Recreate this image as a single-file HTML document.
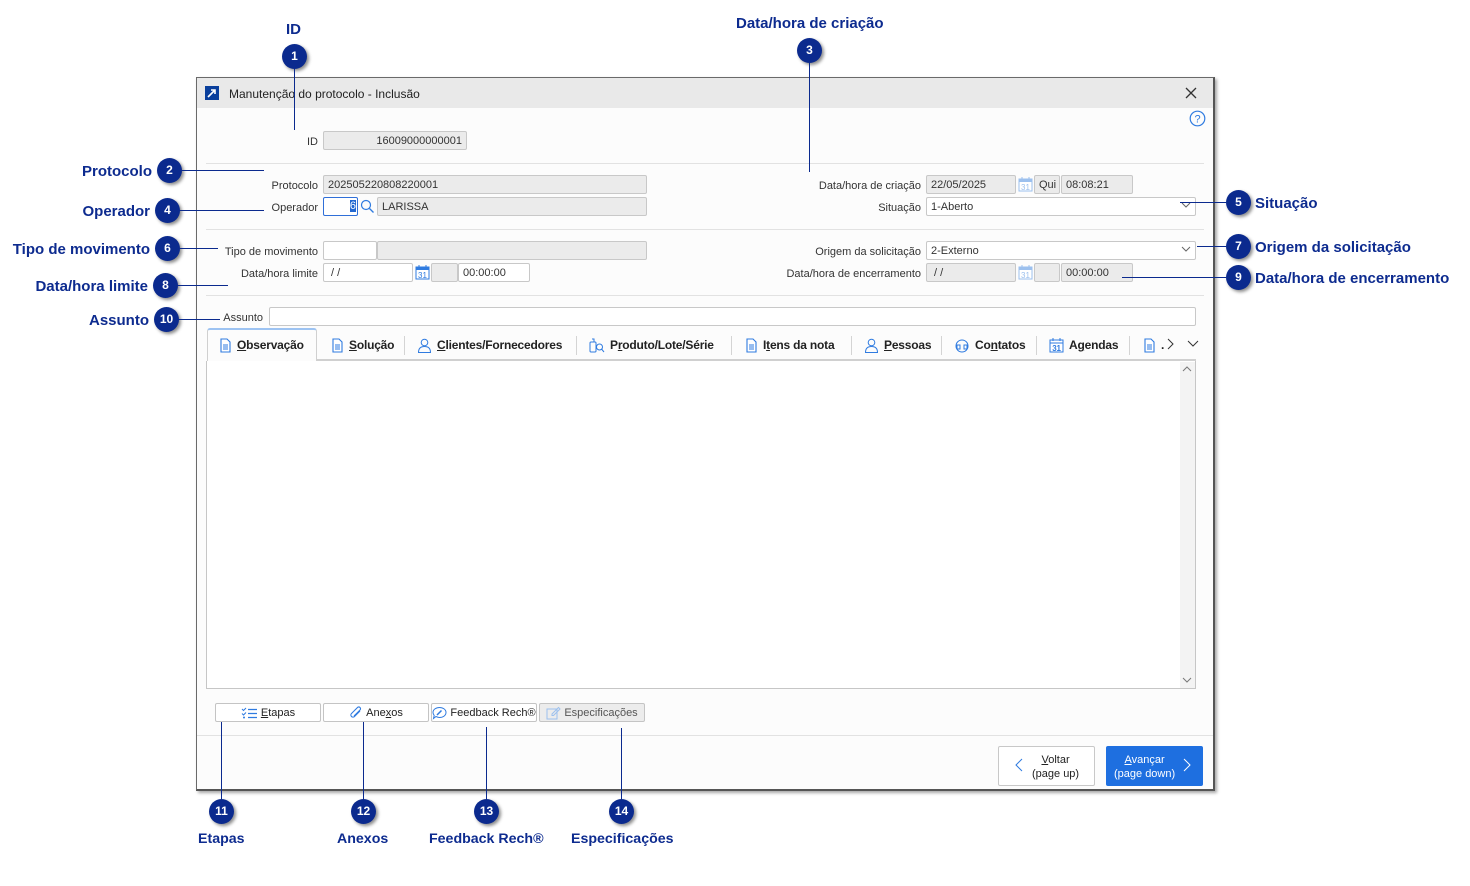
<!DOCTYPE html>
<html><head><meta charset="utf-8">
<style>
*{box-sizing:border-box;margin:0;padding:0}
body{width:1470px;height:886px;background:#fff;position:relative;overflow:hidden;font-family:"Liberation Sans",sans-serif;font-size:11px;color:#222}
.a{position:absolute}
.dlg{left:196px;top:77px;width:1019px;height:714px;background:#fcfcfc;border:1px solid #6a6a6a;border-right:2px solid #555;border-bottom:2px solid #555;box-shadow:2px 2px 3px rgba(0,0,0,.35)}
.tb{left:197px;top:78px;width:1016px;height:30px;background:#e9e9e9}
.lbl{font-size:11px;color:#333;text-align:right;white-space:nowrap;margin-top:1px}
.box{background:#ebebeb;border:1px solid #c8c8c8;border-radius:2px;height:19px;font-size:11px;padding:3px 4px 0;color:#333;white-space:nowrap;overflow:hidden}
.wb{background:#fff}
.sep{height:1px;background:#e2e2e2;left:206px;width:998px}
.c{width:25px;height:25px;border-radius:50%;background:#0b2a8e;color:#fff;font-weight:bold;font-size:12px;text-align:center;line-height:25px;box-shadow:2px 2px 3px rgba(0,0,0,.45)}
.ct{color:#0d2b8f;font-weight:bold;font-size:15px;white-space:nowrap;margin-top:2px}
.bt{font-size:14.2px}
.hl{height:1px;background:#0b2a8e}
.vl{width:1px;background:#0b2a8e}
.tab{top:330px;height:30px;font-weight:bold;font-size:12px;letter-spacing:-.2px;color:#222;white-space:nowrap;line-height:30px;display:flex;align-items:center;gap:5px}
.tab u{text-decoration:underline}
.tsep{top:336px;width:1px;height:19px;background:#d4d4d4}
.btn{top:703px;height:19px;border:1px solid #c4c4c4;border-radius:2px;background:#fff;font-size:11px;display:flex;align-items:center;justify-content:center;gap:3px;color:#222;padding-top:1px}
</style></head><body>

<div class="a dlg"></div>
<div class="a tb"></div>
<svg class="a" style="left:205px;top:86px" width="14" height="14"><rect width="14" height="14" fill="#0a3f9c"/><path d="M3 11 L10 4 M6 4 H10 V8" stroke="#fff" stroke-width="1.6" fill="none"/></svg>
<div class="a" style="left:229px;top:87px;font-size:12px;color:#222">Manutenção do protocolo - Inclusão</div>
<svg class="a" style="left:1185px;top:87px" width="12" height="12"><path d="M1 1L11 11M11 1L1 11" stroke="#333" stroke-width="1.3"/></svg>
<svg class="a" style="left:1189px;top:110px" width="17" height="17"><circle cx="8.5" cy="8.5" r="7.3" stroke="#2f7be0" stroke-width="1.2" fill="none"/><text x="8.5" y="12.5" font-size="11" fill="#2f7be0" text-anchor="middle" font-family="Liberation Sans">?</text></svg>

<div class="a lbl" style="left:280px;top:135px;width:38px">ID</div>
<div class="a box" style="left:323px;top:131px;width:144px;text-align:right">16009000000001</div>
<div class="a sep" style="top:163px"></div>

<div class="a lbl" style="left:230px;top:179px;width:88px">Protocolo</div>
<div class="a box" style="left:323px;top:175px;width:324px">202505220808220001</div>
<div class="a lbl" style="left:230px;top:201px;width:88px">Operador</div>
<div class="a box wb" style="left:323px;top:197px;width:35px;border:1px solid #2f6fd8;text-align:right;padding:2px 1px"><span style="background:#2268d0;color:#fff">6</span></div>
<svg class="a" style="left:360px;top:199px" width="15" height="15"><circle cx="6" cy="6" r="4.5" stroke="#2f7be0" stroke-width="1.2" fill="none"/><path d="M9.5 9.5L13.5 13.5" stroke="#2f7be0" stroke-width="1.3"/></svg>
<div class="a box" style="left:377px;top:197px;width:270px">LARISSA</div>
<div class="a sep" style="top:229px"></div>

<div class="a lbl" style="left:210px;top:245px;width:108px">Tipo de movimento</div>
<div class="a box wb" style="left:323px;top:241px;width:54px"></div>
<div class="a box" style="left:377px;top:241px;width:270px"></div>
<div class="a lbl" style="left:210px;top:267px;width:108px">Data/hora limite</div>
<div class="a box wb" style="left:323px;top:263px;width:90px">&nbsp;/ /</div>
<svg class="a" style="left:415px;top:264px" width="15" height="16"><rect x="1" y="3" width="13" height="12" stroke="#2f7be0" fill="#fff"/><rect x="1" y="3" width="13" height="3" fill="#2f7be0"/><path d="M4 1V4M11 1V4" stroke="#2f7be0"/><text x="7.5" y="14" font-size="8" fill="#2f7be0" text-anchor="middle">31</text></svg>
<div class="a box" style="left:431px;top:263px;width:27px"></div>
<div class="a box wb" style="left:458px;top:263px;width:72px">00:00:00</div>
<div class="a sep" style="top:295px"></div>

<div class="a lbl" style="left:216px;top:311px;width:47px">Assunto</div>
<div class="a box wb" style="left:269px;top:307px;width:927px"></div>

<div class="a lbl" style="left:760px;top:179px;width:161px">Data/hora de criação</div>
<div class="a box" style="left:926px;top:175px;width:90px">22/05/2025</div>
<svg class="a" style="left:1018px;top:176px" width="15" height="16"><rect x="1" y="3" width="13" height="12" stroke="#9cc0ee" fill="#fff"/><rect x="1" y="3" width="13" height="3" fill="#9cc0ee"/><path d="M4 1V4M11 1V4" stroke="#9cc0ee"/><text x="7.5" y="14" font-size="8" fill="#9cc0ee" text-anchor="middle">31</text></svg>
<div class="a box" style="left:1034px;top:175px;width:26px">Qui</div>
<div class="a box" style="left:1061px;top:175px;width:72px">08:08:21</div>
<div class="a lbl" style="left:760px;top:201px;width:161px">Situação</div>
<div class="a box wb" style="left:926px;top:197px;width:270px">1-Aberto</div>
<svg class="a" style="left:1181px;top:202px" width="10" height="7"><path d="M1 1L5 5L9 1" stroke="#666" fill="none"/></svg>
<div class="a lbl" style="left:760px;top:245px;width:161px">Origem da solicitação</div>
<div class="a box wb" style="left:926px;top:241px;width:270px">2-Externo</div>
<svg class="a" style="left:1181px;top:246px" width="10" height="7"><path d="M1 1L5 5L9 1" stroke="#666" fill="none"/></svg>
<div class="a lbl" style="left:760px;top:267px;width:161px">Data/hora de encerramento</div>
<div class="a box" style="left:926px;top:263px;width:90px">&nbsp;/ /</div>
<svg class="a" style="left:1018px;top:264px" width="15" height="16"><rect x="1" y="3" width="13" height="12" stroke="#9cc0ee" fill="#fff"/><rect x="1" y="3" width="13" height="3" fill="#9cc0ee"/><path d="M4 1V4M11 1V4" stroke="#9cc0ee"/><text x="7.5" y="14" font-size="8" fill="#9cc0ee" text-anchor="middle">31</text></svg>
<div class="a box" style="left:1034px;top:263px;width:26px"></div>
<div class="a box" style="left:1061px;top:263px;width:72px">00:00:00</div>

<div class="a" style="left:207px;top:359px;width:989px;height:2px;background:#d0d0d0"></div>
<div class="a" style="left:207px;top:328px;width:110px;height:33px;background:#fcfcfc;border:1px solid #d0d0d0;border-bottom:none;border-top:2px solid #9dc3f2;border-radius:3px 3px 0 0"></div>
<svg width="0" height="0" style="position:absolute"><defs><g id="doc"><path d="M2 1H8L11 4V14H2Z" stroke="#2f7be0" stroke-width="1.1" fill="#fff"/><path d="M4 7H9M4 9H9M4 11H9" stroke="#2f7be0"/></g></defs></svg>
<div class="a tab" style="left:219px"><svg width="13" height="15"><use href="#doc"/></svg><span><u>O</u>bservação</span></div>
<div class="a tab" style="left:331px"><svg width="13" height="15"><use href="#doc"/></svg><span><u>S</u>olução</span></div>
<div class="a tsep" style="left:404px"></div>
<div class="a tab" style="left:417px"><svg width="15" height="15"><circle cx="7.5" cy="4.5" r="3.3" stroke="#2f7be0" fill="none"/><path d="M1.5 14.5C1.5 10 4 8.5 7.5 8.5S13.5 10 13.5 14.5Z" stroke="#2f7be0" fill="none"/></svg><span><u>C</u>lientes/Fornecedores</span></div>
<div class="a tsep" style="left:576px"></div>
<div class="a tab" style="left:589px"><svg width="16" height="15"><rect x="1" y="4" width="6" height="10" rx="1" stroke="#2f7be0" fill="none"/><path d="M3 1H5V4" stroke="#2f7be0" fill="none"/><circle cx="10.5" cy="9" r="3" stroke="#2f7be0" fill="none"/><path d="M12.5 11L15 14" stroke="#2f7be0"/></svg><span>P<u>r</u>oduto/Lote/Série</span></div>
<div class="a tsep" style="left:731px"></div>
<div class="a tab" style="left:745px"><svg width="13" height="15"><use href="#doc"/></svg><span>I<u>t</u>ens da nota</span></div>
<div class="a tsep" style="left:851px"></div>
<div class="a tab" style="left:864px"><svg width="15" height="15"><circle cx="7.5" cy="4.5" r="3.3" stroke="#2f7be0" fill="none"/><path d="M1.5 14.5C1.5 10 4 8.5 7.5 8.5S13.5 10 13.5 14.5Z" stroke="#2f7be0" fill="none"/></svg><span><u>P</u>essoas</span></div>
<div class="a tsep" style="left:941px"></div>
<div class="a tab" style="left:954px"><svg width="16" height="15"><circle cx="8" cy="8" r="6" stroke="#2f7be0" fill="none"/><rect x="3" y="7" width="3" height="4" stroke="#2f7be0" fill="none"/><rect x="10" y="7" width="3" height="4" stroke="#2f7be0" fill="none"/></svg><span>Co<u>n</u>tatos</span></div>
<div class="a tsep" style="left:1036px"></div>
<div class="a tab" style="left:1049px"><svg width="15" height="16"><rect x="1" y="3" width="13" height="12" stroke="#2f7be0" fill="#fff"/><path d="M1 6H14M4 1V4M11 1V4" stroke="#2f7be0"/><text x="7.5" y="14" font-size="8" fill="#2f7be0" text-anchor="middle">31</text></svg><span>A<u>g</u>endas</span></div>
<div class="a tsep" style="left:1129px"></div>
<div class="a tab" style="left:1143px"><svg width="13" height="15"><use href="#doc"/></svg><span>.</span></div>
<svg class="a" style="left:1167px;top:338px" width="8" height="12"><path d="M1 1L6 6L1 11" stroke="#333" fill="none"/></svg>
<svg class="a" style="left:1187px;top:340px" width="12" height="8"><path d="M1 1L6 6L11 1" stroke="#333" fill="none"/></svg>

<div class="a" style="left:206px;top:361px;width:990px;height:328px;background:#fff;border:1px solid #c6c6c6;border-top:none"></div>
<div class="a" style="left:1180px;top:362px;width:15px;height:326px;background:#f3f3f3"></div>
<svg class="a" style="left:1182px;top:366px" width="10" height="6"><path d="M1 5L5 1L9 5" stroke="#777" fill="none"/></svg>
<svg class="a" style="left:1182px;top:677px" width="10" height="6"><path d="M1 1L5 5L9 1" stroke="#777" fill="none"/></svg>

<div class="a btn" style="left:215px;width:106px"><svg width="17" height="13"><path d="M1 2L2.5 3.5L5 1M1 6.5L2.5 8L5 5.5" stroke="#2f7be0" fill="none"/><path d="M7 2.5H16M7 6.5H16M7 10.5H16" stroke="#2f7be0" stroke-width="1.3"/><circle cx="3" cy="10.5" r="1" fill="#2f7be0"/></svg><span><u>E</u>tapas</span></div>
<div class="a btn" style="left:323px;width:106px"><svg width="14" height="14"><path d="M11 5L5.5 10.5A2 2 0 0 1 2.5 7.5L8.5 1.5A1.5 1.5 0 0 1 11 4L5 10" stroke="#2f7be0" fill="none" stroke-width="1.1"/></svg><span>Ane<u>x</u>os</span></div>
<div class="a btn" style="left:431px;width:106px"><svg width="15" height="14"><path d="M7.5 1.5C11 1.5 14 3.5 14 6.5S11 11.5 7.5 11.5C6 11.5 5 11 4 10.5L1.5 12.5L2.2 9.5C1.5 8.5 1 7.5 1 6.5C1 3.5 4 1.5 7.5 1.5Z" stroke="#2f7be0" fill="none"/><path d="M5 9L9.5 4.5" stroke="#2f7be0" stroke-width="1.5"/></svg><span>Feedback Rech®</span></div>
<div class="a btn" style="left:539px;width:106px;background:#ececec;color:#555"><svg width="15" height="14"><rect x="1" y="3" width="10" height="10" stroke="#9cc0ee" fill="none"/><path d="M6 8L12.5 1.5L14 3L7.5 9.5H6Z" stroke="#9cc0ee" fill="none"/></svg><span>Especificações</span></div>
<div class="a" style="left:197px;top:735px;width:1016px;height:1px;background:#e2e2e2"></div>

<div class="a" style="left:998px;top:746px;width:97px;height:40px;border:1px solid #c8c8c8;border-radius:2px;background:#fff"></div>
<svg class="a" style="left:1015px;top:758px" width="8" height="14"><path d="M7 1L1 7L7 13" stroke="#2f7be0" fill="none"/></svg>
<div class="a" style="left:1032px;top:753px;font-size:11px;line-height:14px;text-align:center;color:#222"><u>V</u>oltar<br>(page up)</div>
<div class="a" style="left:1106px;top:746px;width:97px;height:40px;border-radius:2px;background:#1e6fe0"></div>
<svg class="a" style="left:1183px;top:758px" width="8" height="14"><path d="M1 1L7 7L1 13" stroke="#fff" fill="none"/></svg>
<div class="a" style="left:1114px;top:753px;font-size:11px;line-height:14px;text-align:center;color:#fff"><u>A</u>vançar<br>(page down)</div>

<div class="a ct" style="left:286px;top:19px">ID</div>
<div class="a c" style="left:282px;top:44px">1</div>
<div class="a vl" style="left:294px;top:68px;height:62px"></div>

<div class="a ct" style="left:736px;top:13px">Data/hora de criação</div>
<div class="a c" style="left:797px;top:38px">3</div>
<div class="a vl" style="left:809px;top:62px;height:110px"></div>

<div class="a ct" style="left:0;width:152px;text-align:right;top:161px">Protocolo</div>
<div class="a c" style="left:157px;top:158px">2</div>
<div class="a hl" style="left:181px;top:170px;width:83px"></div>
<div class="a ct" style="left:0;width:150px;text-align:right;top:201px">Operador</div>
<div class="a c" style="left:155px;top:198px">4</div>
<div class="a hl" style="left:179px;top:210px;width:85px"></div>
<div class="a ct" style="left:0;width:150px;text-align:right;top:239px">Tipo de movimento</div>
<div class="a c" style="left:155px;top:236px">6</div>
<div class="a hl" style="left:179px;top:248px;width:39px"></div>
<div class="a ct" style="left:0;width:148px;text-align:right;top:276px">Data/hora limite</div>
<div class="a c" style="left:153px;top:273px">8</div>
<div class="a hl" style="left:177px;top:285px;width:51px"></div>
<div class="a ct" style="left:0;width:149px;text-align:right;top:310px">Assunto</div>
<div class="a c" style="left:154px;top:307px">10</div>
<div class="a hl" style="left:178px;top:319px;width:42px"></div>

<div class="a hl" style="left:1180px;top:202px;width:46px"></div>
<div class="a c" style="left:1226px;top:190px">5</div>
<div class="a ct" style="left:1255px;top:193px">Situação</div>
<div class="a hl" style="left:1197px;top:246px;width:29px"></div>
<div class="a c" style="left:1226px;top:234px">7</div>
<div class="a ct" style="left:1255px;top:237px">Origem da solicitação</div>
<div class="a hl" style="left:1122px;top:277px;width:104px"></div>
<div class="a c" style="left:1226px;top:265px">9</div>
<div class="a ct" style="left:1255px;top:268px">Data/hora de encerramento</div>

<div class="a vl" style="left:221px;top:722px;height:78px"></div>
<div class="a c" style="left:209px;top:799px">11</div>
<div class="a ct bt" style="left:198px;top:829px">Etapas</div>
<div class="a vl" style="left:363px;top:722px;height:78px"></div>
<div class="a c" style="left:351px;top:799px">12</div>
<div class="a ct bt" style="left:337px;top:829px">Anexos</div>
<div class="a vl" style="left:486px;top:727px;height:73px"></div>
<div class="a c" style="left:474px;top:799px">13</div>
<div class="a ct bt" style="left:429px;top:829px">Feedback Rech®</div>
<div class="a vl" style="left:621px;top:728px;height:72px"></div>
<div class="a c" style="left:609px;top:799px">14</div>
<div class="a ct bt" style="left:571px;top:829px">Especificações</div>

</body></html>
